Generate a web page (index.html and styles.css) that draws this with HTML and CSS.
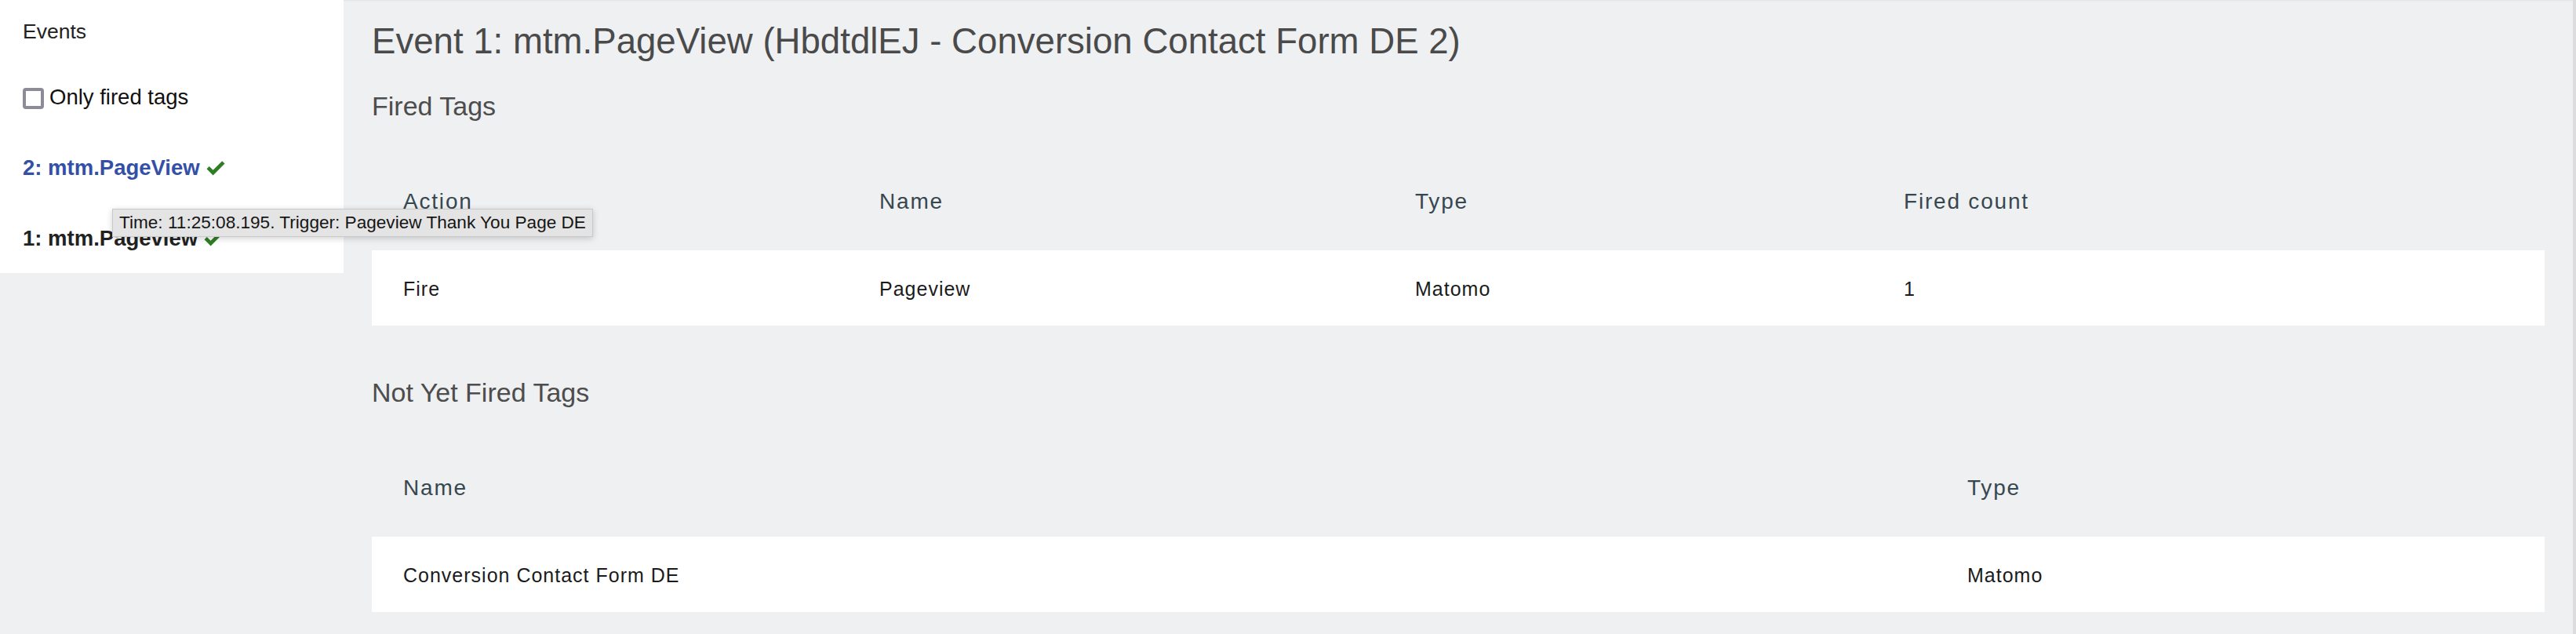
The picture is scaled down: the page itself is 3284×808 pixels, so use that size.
FILE: index.html
```html
<!DOCTYPE html>
<html lang="en">
<head>
<meta charset="utf-8">
<title>Matomo Tag Manager Debug</title>
<link rel="stylesheet" href="styles.css">
</head>
<body>
<div class="layout">
  <aside class="sidebar">
    <div class="sidebar-title">Events</div>
    <label class="filter"><span class="checkbox"></span>Only fired tags</label>
    <div class="event event-active">2: mtm.PageView <svg class="check" viewBox="0 0 26 19"><path d="M1.5 9.5 L4.8 6.2 L9.6 11 L21.2 -0.6 L24.5 2.7 L9.6 17.6 Z" transform="translate(0 0.8)"/></svg></div>
    <div class="event">1: mtm.Pageview <svg class="check" viewBox="0 0 26 19"><path d="M1.5 9.5 L4.8 6.2 L9.6 11 L21.2 -0.6 L24.5 2.7 L9.6 17.6 Z" transform="translate(0 0.8)"/></svg></div>
    <div class="tooltip">Time: 11:25:08.195. Trigger: Pageview Thank You Page DE</div>
  </aside>
  <main class="content">
    <h1 class="page-title">Event 1: mtm.PageView (HbdtdlEJ - Conversion Contact Form DE 2)</h1>
    <h2 class="section-title">Fired Tags</h2>
    <div class="grid grid-fired">
      <div class="th">Action</div>
      <div class="th">Name</div>
      <div class="th">Type</div>
      <div class="th">Fired count</div>
      <div class="td">Fire</div>
      <div class="td">Pageview</div>
      <div class="td">Matomo</div>
      <div class="td">1</div>
    </div>
    <h2 class="section-title section-gap">Not Yet Fired Tags</h2>
    <div class="grid grid-notfired">
      <div class="th">Name</div>
      <div class="th">Type</div>
      <div class="td">Conversion Contact Form DE</div>
      <div class="td">Matomo</div>
    </div>
  </main>
</div>
</body>
</html>
```
FILE: styles.css
```css
html, body {
  margin: 0;
  padding: 0;
}
body {
  background: #eff0f2;
  font-family: "Liberation Sans", Arial, sans-serif;
  color: #212121;
  width: 3284px;
  height: 808px;
  overflow: hidden;
}
.layout {
  display: flex;
  align-items: flex-start;
}
.sidebar {
  position: relative;
  flex: 0 0 438px;
  box-sizing: border-box;
  height: 348px;
  background: #ffffff;
  padding: 22px 0 0 29px;
  font-size: 26.5px;
  z-index: 2;
}
.sidebar-title {
  line-height: 36px;
  color: #222;
}
.filter {
  display: flex;
  align-items: center;
  margin-top: 48px;
  font-size: 27.5px;
  line-height: 36px;
  color: #111;
}
.checkbox {
  display: inline-block;
  width: 27px;
  height: 27px;
  box-sizing: border-box;
  border: 4px solid #8c8b98;
  border-radius: 4px;
  margin-right: 7px;
  margin-top: 2px;
}
.event {
  display: flex;
  align-items: center;
  font-weight: bold;
  font-size: 27.5px;
  line-height: 36px;
  color: #222;
}
.event-active {
  margin-top: 54px;
  color: #3450a6;
}
.event + .event {
  margin-top: 54px;
}
.check {
  width: 26px;
  height: 19px;
  margin-left: 7px;
  fill: #2f7d25;
}
.tooltip {
  position: absolute;
  left: 143px;
  top: 266px;
  box-sizing: border-box;
  height: 36px;
  padding: 0 8px 0 8px;
  background: #e4e4e4;
  border: 1px solid #c9c9c9;
  box-shadow: 0 2px 8px rgba(0,0,0,0.18);
  font-size: 22.6px;
  line-height: 34px;
  font-weight: normal;
  color: #161616;
  white-space: nowrap;
}
.content {
  flex: 1;
  box-sizing: border-box;
  height: 808px;
  padding: 25px 36px 0 36px;
  border-right: 4px solid #dcdcde;
  box-shadow: inset 0 3px 2px -2px rgba(0,0,0,0.06);
}
.page-title {
  margin: 0;
  font-size: 45.6px;
  line-height: 56px;
  font-weight: normal;
  color: #4a4a4a;
}
.section-title {
  margin: 34px 0 0 0;
  font-size: 34px;
  line-height: 40px;
  font-weight: normal;
  color: #4d4d4d;
}
.section-gap {
  margin-top: 65px;
}
.grid {
  display: grid;
  margin-top: 40px;
}
.grid-fired {
  grid-template-columns: 607px 683px 623px 1fr;
}
.grid-notfired {
  grid-template-columns: 1994px 1fr;
  margin-top: 40px;
}
.th {
  padding: 46px 0 46px 40px;
  font-size: 28px;
  line-height: 32px;
  letter-spacing: 1.8px;
  color: #37474f;
}
.td {
  background: #ffffff;
  padding: 34px 0 32px 40px;
  font-size: 25px;
  line-height: 30px;
  letter-spacing: 1px;
  color: #1b1b1b;
}
```
